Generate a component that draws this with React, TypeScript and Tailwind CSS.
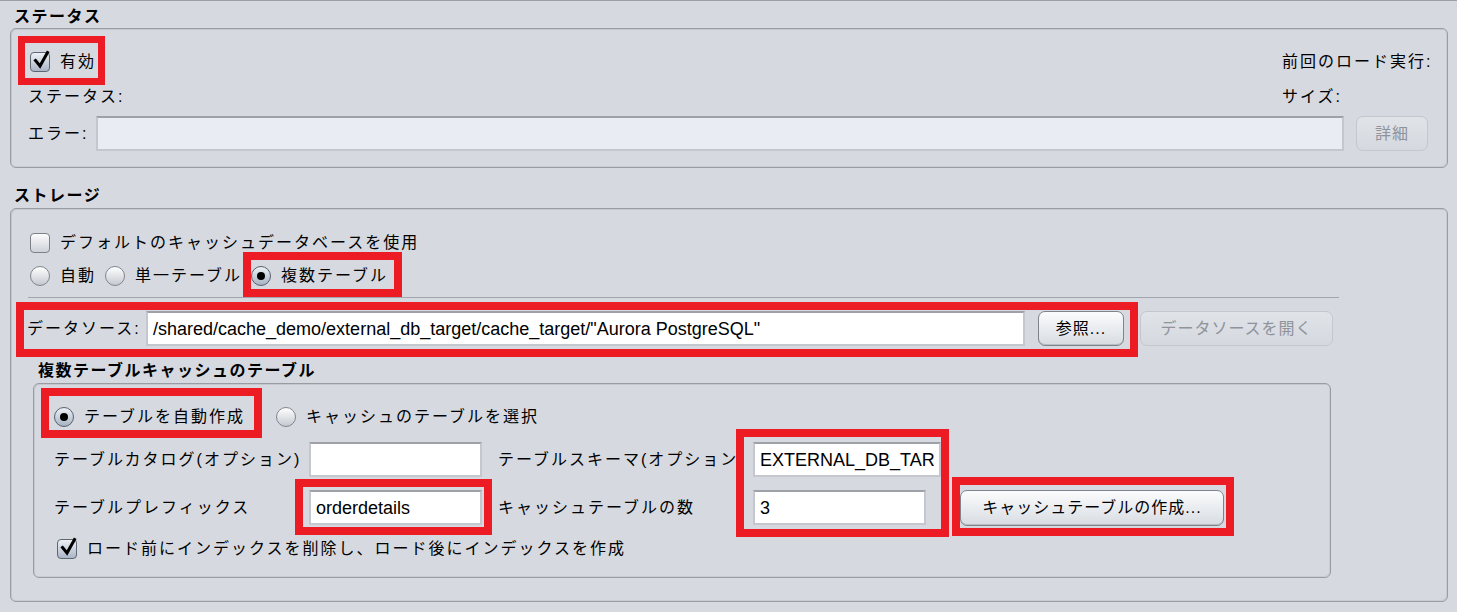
import React from 'react';

// red annotation frame drawn over a wrapped element
function Highlight({ className }: { className: string }) {
  return <span className={`pointer-events-none absolute border-[#ed1c24] ${className}`} />;
}

function CheckBox({ checked }: { checked?: boolean }) {
  return (
    <span
      className={`relative flex h-[20px] w-[20px] shrink-0 items-center justify-center rounded-[4px] border ${
        checked
          ? 'border-[#5d6673] bg-linear-to-b from-[#eef2f7] to-[#aab5c6]'
          : 'border-[#7b808a] bg-linear-to-b from-[#fbfcfd] to-[#cdd1d8]'
      }`}
    >
      {checked && (
        <svg viewBox="0 0 20 20" className="absolute -top-[3px] left-[1px] h-[20px] w-[20px]">
          <path d="M3.5 10.5 L8 16 L15.5 2.5" fill="none" stroke="#000" strokeWidth="3" strokeLinecap="square" />
        </svg>
      )}
    </span>
  );
}

function Radio({ selected }: { selected?: boolean }) {
  return (
    <span
      className={`flex h-[20px] w-[20px] shrink-0 items-center justify-center rounded-full border ${
        selected
          ? 'border-[#56606d] bg-linear-to-b from-[#eef2f7] to-[#a7b2c3]'
          : 'border-[#80858e] bg-linear-to-b from-[#ffffff] to-[#c5c9d0]'
      }`}
    >
      {selected && <span className="h-[8px] w-[8px] rounded-full bg-black" />}
    </span>
  );
}

const jp = 'text-[16px] tracking-[2px] leading-[24px] whitespace-nowrap';
const input =
  'flex items-center overflow-hidden whitespace-nowrap border-2 border-[#c4c7cd] border-t-[#9ea1a8] bg-white px-[5px] text-[18px] leading-none';
const button =
  'flex items-center justify-center rounded-[7px] border border-[#7f838b] bg-linear-to-b from-[#fbfcfd] to-[#d8dce2] shadow-[inset_0_-1px_0_#b8bcc3] text-[16px] tracking-[1px] whitespace-nowrap';
const buttonOff =
  'flex items-center justify-center rounded-[7px] border border-[#c4c7cd] bg-linear-to-b from-[#e0e3e8] to-[#d5d8de] text-[16px] tracking-[1px] text-[#8f939a] whitespace-nowrap';
const group = 'rounded-[6px] border border-[#999ca3] shadow-[inset_1px_1px_0_#c4c7cd,inset_-1px_-1px_0_#c9ccd2]';

export default function App() {
  return (
    <div className="h-[612px] w-[1457px] overflow-hidden border-t border-[#9da0a7] bg-[#d6d9df] font-['Liberation_Sans','Noto_Sans_CJK_JP',sans-serif] text-black">
      {/* Status */}
      <div className="pl-[14px] pt-[5px] text-[16px] font-bold tracking-[1.5px] leading-[22px]">ステータス</div>
      <div className={`ml-[10px] mr-[9px] h-[140px] ${group}`}>
        <div className="mt-[21px] flex h-[24px] items-center">
          <label className="relative ml-[19px] flex items-center gap-[10px]">
            <Highlight className="-left-[12px] -right-[9px] -top-[14px] -bottom-[11px] border-[7px]" />
            <CheckBox checked />
            <span className={jp}>有効</span>
          </label>
          <span className={`ml-auto w-[165px] ${jp}`}>前回のロード実行:</span>
        </div>
        <div className="mt-[11px] flex h-[24px] items-center">
          <span className={`ml-[17px] ${jp}`}>ステータス:</span>
          <span className={`ml-auto w-[165px] ${jp}`}>サイズ:</span>
        </div>
        <div className="mt-[7px] flex h-[35px] items-center pr-[19px]">
          <span className={`ml-[17px] w-[68px] ${jp}`}>エラー:</span>
          <div className="h-full flex-1 border-2 border-[#c4c7cd] border-t-[#9ea1a8] bg-[#e9ecf3]" />
          <div className={`ml-[12px] h-full w-[72px] ${buttonOff}`}>詳細</div>
        </div>
      </div>

      {/* Storage */}
      <div className="pl-[14px] pt-[17px] text-[16px] font-bold tracking-[1.5px] leading-[22px]">ストレージ</div>
      <div className={`ml-[10px] mr-[9px] mt-[1px] h-[394px] ${group}`}>
        <div className="ml-[19px] mt-[22px] flex h-[24px] items-center gap-[10px]">
          <CheckBox />
          <span className={jp}>デフォルトのキャッシュデータベースを使用</span>
        </div>
        <div className="ml-[19px] mt-[9px] flex h-[24px] items-center gap-[9px]">
          <label className="flex items-center gap-[10px]">
            <Radio />
            <span className={jp}>自動</span>
          </label>
          <label className="flex items-center gap-[10px]">
            <Radio />
            <span className={jp}>単一テーブル</span>
          </label>
          <label className="relative flex items-center gap-[10px]">
            <Highlight className="-left-[8px] -right-[14px] -top-[12px] -bottom-[9px] border-[8px]" />
            <Radio selected />
            <span className={jp}>複数テーブル</span>
          </label>
        </div>
        <div className="ml-[17px] mt-[9px] h-[2px] w-[1311px] border-t border-[#a2a5ac]" />
        <div className="mt-[12px] flex h-[35px] items-center">
          <div className="relative ml-[16px] flex h-full items-center">
            <Highlight className="-left-[11px] -right-[14px] -top-[9px] -bottom-[11px] border-[8px]" />
            <span className={`w-[119px] ${jp}`}>データソース:</span>
            <div className={`h-full w-[879px] ${input}`}>/shared/cache_demo/external_db_target/cache_target/"Aurora PostgreSQL"</div>
            <div className={`ml-[13px] h-full w-[86px] ${button}`}>参照...</div>
          </div>
          <div className={`ml-[16px] h-full w-[193px] ${buttonOff}`}>データソースを開く</div>
        </div>

        <div className="ml-[27px] mt-[14px] text-[16px] font-bold tracking-[1.5px] leading-[22px]">複数テーブルキャッシュのテーブル</div>
        <div className={`ml-[22px] mt-[1px] h-[195px] w-[1298px] ${group}`}>
          <div className="ml-[20px] mt-[21px] flex h-[24px] items-center">
            <label className="relative flex items-center gap-[10px]">
              <Highlight className="-left-[13px] -right-[17px] -top-[17px] -bottom-[9px] border-[8px]" />
              <Radio selected />
              <span className={jp}>テーブルを自動作成</span>
            </label>
            <label className="ml-[31px] flex items-center gap-[10px]">
              <Radio />
              <span className={jp}>キャッシュのテーブルを選択</span>
            </label>
          </div>

          <div className="ml-[20px] mt-[13px] grid grid-cols-[255px_189px_255px_207px_auto] grid-rows-[35px_35px] gap-y-[13px]">
            <span className={`col-start-1 row-start-1 self-center overflow-hidden ${jp}`}>テーブルカタログ(オプション)</span>
            <div className={`col-start-2 row-start-1 h-[35px] w-[173px] ${input}`} />
            <span className={`col-start-3 row-start-1 self-center overflow-hidden ${jp}`}>テーブルスキーマ(オプション</span>
            <div className="relative col-start-4 row-span-2 row-start-1 flex w-[188px] flex-col justify-between">
              <div className={`h-[35px] w-[188px] ${input}`}>EXTERNAL_DB_TAR</div>
              <div className={`h-[35px] w-[173px] ${input}`}>3</div>
              <Highlight className="-left-[17px] -right-[8px] -top-[13px] -bottom-[12px] border-[8px]" />
            </div>

            <span className={`col-start-1 row-start-2 self-center overflow-hidden ${jp}`}>テーブルプレフィックス</span>
            <div className="relative col-start-2 row-start-2 w-[173px]">
              <Highlight className="-left-[14px] -right-[10px] -top-[11px] -bottom-[10px] border-[8px]" />
              <div className={`h-[35px] w-[173px] ${input}`}>orderdetails</div>
            </div>
            <span className={`col-start-3 row-start-2 self-center overflow-hidden ${jp}`}>キャッシュテーブルの数</span>
            <div className="relative col-start-5 row-start-2 w-[264px]">
              <Highlight className="-left-[8px] -right-[10px] -top-[13px] -bottom-[11px] border-[8px]" />
              <div className={`h-[36px] w-[264px] ${button}`}>キャッシュテーブルの作成...</div>
            </div>
          </div>

          <div className="ml-[23px] mt-[12px] flex h-[24px] items-center gap-[10px]">
            <CheckBox checked />
            <span className={jp}>ロード前にインデックスを削除し、ロード後にインデックスを作成</span>
          </div>
        </div>
      </div>
    </div>
  );
}
